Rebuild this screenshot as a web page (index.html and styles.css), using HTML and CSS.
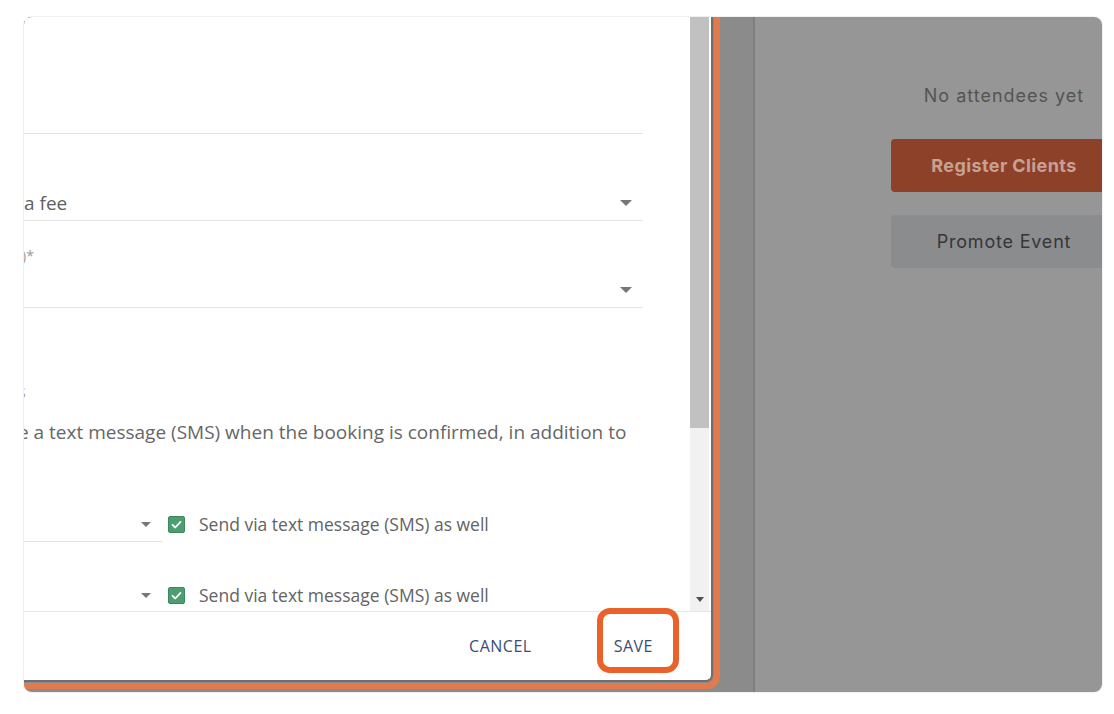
FILE: index.html
```html
<!DOCTYPE html>
<html lang="en">
<head>
<meta charset="utf-8">
<title>Event booking settings</title>
<link rel="stylesheet" href="styles.css">
</head>
<body>
<div class="frame">
  <div class="left">
    <div class="modal">
      <div class="body">
        <div class="content">
          <div class="area"></div>
          <div class="select s1">
            <span class="val"><span class="pre">Clients pay</span>a fee</span>
            <span class="caret"></span>
          </div>
          <div class="label l1"><span class="pre">Payment option (fee</span>)*</div>
          <div class="select s2">
            <span class="val"></span>
            <span class="caret"></span>
          </div>
          <div class="label l2"><span class="pre">CONFIRMATION SM</span>S</div>
          <div class="desc"><span class="pre">Clients will receiv</span>e a text message (SMS) when the booking is confirmed, in addition to</div>
          <div class="row">
            <div class="select small"><span class="val"></span><span class="caret"></span></div>
            <span class="check"><svg viewBox="0 0 17 17" width="17" height="17"><path d="M4.5 8.8l2.8 2.7 5.2-5.6" fill="none" stroke="#fff" stroke-width="1.8" stroke-linecap="round" stroke-linejoin="round"/></svg></span>
            <span class="check-label">Send via text message (SMS) as well</span>
          </div>
          <div class="row r2">
            <div class="select small"><span class="val"></span><span class="caret"></span></div>
            <span class="check"><svg viewBox="0 0 17 17" width="17" height="17"><path d="M4.5 8.8l2.8 2.7 5.2-5.6" fill="none" stroke="#fff" stroke-width="1.8" stroke-linecap="round" stroke-linejoin="round"/></svg></span>
            <span class="check-label">Send via text message (SMS) as well</span>
          </div>
        </div>
        <div class="scrollbar">
          <div class="thumb"></div>
          <span class="sb-arrow"></span>
        </div>
      </div>
      <div class="footer">
        <button class="btn cancel">Cancel</button>
        <button class="btn save">Save</button>
      </div>
    </div>
  </div>
  <div class="right">
    <p class="empty">No attendees yet</p>
    <button class="pbtn primary">Register Clients</button>
    <button class="pbtn secondary">Promote Event</button>
  </div>
</div>
</body>
</html>
```

FILE: styles.css
```css
* { box-sizing: border-box; }
html, body { margin: 0; padding: 0; background: #ffffff; }
body { width: 1114px; height: 714px; overflow: hidden; font-family: "Open Sans", "Liberation Sans", sans-serif; }

.frame {
  margin: 17px 0 0 24px;
  width: 1078px;
  height: 675px;
  border-radius: 8px;
  overflow: hidden;
  display: flex;
  background: #ffffff;
  box-shadow: 0 0 0 1px #f0f0f2;
}

.left {
  width: 729px;
  flex: none;
}

.modal {
  width: 687px;
  height: 663px;
  background: #ffffff;
  border-radius: 0 0 5px 0;
  box-shadow: 0 0 0 2px #6f6f6f, 0 0 0 3px #8b8b8b, 0 0 0 9px #e27a4e, 0 0 0 42px #8b8b8b;
  display: flex;
  flex-direction: column;
  overflow: hidden;
}

.body {
  height: 594px;
  display: flex;
  flex: none;
}

.content {
  flex: 1;
  padding-right: 47px;
  overflow: hidden;
  color: #666666;
}

.pre {
  display: inline-block;
  width: 0;
  direction: rtl;
  white-space: nowrap;
}

.area {
  height: 117px;
  border-bottom: 1px solid #e3e3e3;
}

.select {
  display: flex;
  align-items: center;
  justify-content: space-between;
  height: 35px;
  border-bottom: 1px solid #e3e3e3;
  padding-right: 11px;
}
.select .val { font-size: 19px; white-space: nowrap; color: #616161; }
.s1 { margin-top: 52px; }
.s2 { margin-top: 8px; }

.caret {
  width: 0;
  height: 0;
  border-left: 6px solid transparent;
  border-right: 6px solid transparent;
  border-top: 6px solid #767676;
}

.label {
  font-size: 14px;
  line-height: 18px;
  color: #9a9a9a;
  white-space: nowrap;
}
.l1 { margin-top: 26px; margin-left: -2px; }
.l2 { margin-top: 76px; margin-left: -6px; color: #9c9c9c; }

.desc {
  margin-top: 18px;
  margin-left: -6px;
  font-size: 19px;
  line-height: 24px;
  white-space: nowrap;
  color: #666666;
}

.row {
  margin-top: 63px;
  height: 35px;
  display: flex;
  align-items: flex-start;
}
.row.r2 { margin-top: 36px; }
.select.small { width: 138px; flex: none; }
.select.small .caret { border-left-width: 5.5px; border-right-width: 5.5px; border-top-width: 5.5px; }

.check {
  width: 17px;
  height: 17px;
  margin: 9px 0 0 6px;
  background: #4c9d70;
  border: 1px solid #3e875d;
  border-radius: 2px;
  display: flex;
  align-items: center;
  justify-content: center;
  flex: none;
}
.check svg { display: block; margin: -1px; }

.check-label {
  margin-left: 14px;
  font-size: 17.5px;
  line-height: 35px;
  white-space: nowrap;
  color: #636363;
}

.scrollbar {
  width: 19px;
  margin-right: 2px;
  background: #f1f1f1;
  display: flex;
  flex-direction: column;
  align-items: center;
  justify-content: space-between;
  flex: none;
}
.thumb {
  width: 19px;
  height: 411px;
  background: #c1c1c1;
}
.sb-arrow {
  width: 0;
  height: 0;
  border-left: 4.5px solid transparent;
  border-right: 4.5px solid transparent;
  border-top: 5px solid #505050;
  margin-bottom: 9px;
}

.footer {
  flex: 1;
  border-top: 1px solid #e6e6e6;
  display: flex;
  align-items: center;
  justify-content: flex-end;
  padding-right: 43px;
}

.btn {
  background: none;
  border: none;
  font-family: "Open Sans", "Liberation Sans", sans-serif;
  font-size: 16px;
  font-weight: 500;
  letter-spacing: 0.5px;
  text-transform: uppercase;
  color: #3b4d74;
  height: 36px;
  padding: 0 16px;
  cursor: pointer;
}
.cancel { margin-right: 51px; }
.save { position: relative; padding: 0 15px; }
.save::after {
  content: "";
  position: absolute;
  left: -2px;
  right: -11px;
  top: -20px;
  bottom: -9px;
  border: 6px solid #ea622a;
  border-radius: 13px;
}

.right {
  flex: 1;
  background: #969696;
  border-left: 2px solid #7f7f7f;
  padding-left: 136px;
  font-family: "Inter", "Liberation Sans", sans-serif;
  display: flex;
  flex-direction: column;
  align-items: flex-start;
}

.empty {
  margin: 66px 0 0 0;
  width: 226px;
  text-align: center;
  font-size: 18px;
  line-height: 26px;
  letter-spacing: 1px;
  color: #545454;
}

.pbtn {
  width: 226px;
  height: 53px;
  flex: none;
  border: none;
  border-radius: 4px;
  font-family: "Inter", "Liberation Sans", sans-serif;
  font-size: 18px;
  letter-spacing: 0.4px;
}
.primary {
  margin-top: 30px;
  background: #8d4128;
  color: #c7a194;
  font-weight: 700;
}
.secondary {
  margin-top: 23px;
  background: #8b8c8e;
  color: #363636;
  font-weight: 400;
  letter-spacing: 0.8px;
}
```
